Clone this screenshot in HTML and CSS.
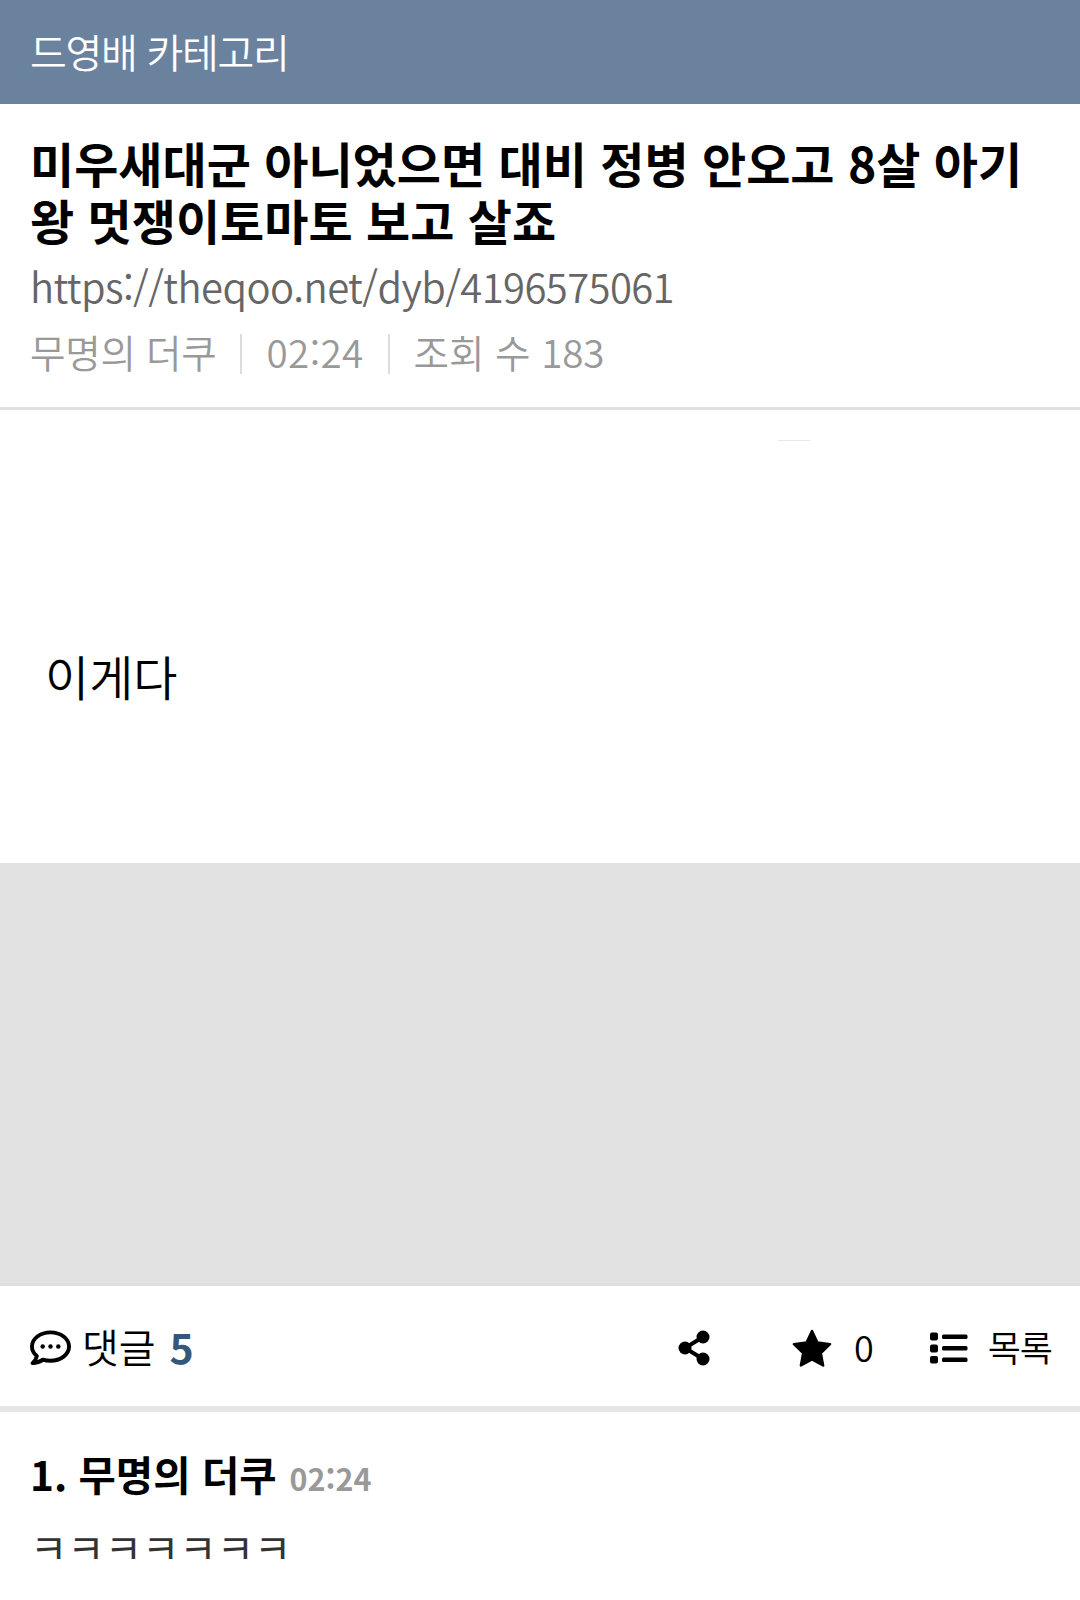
FILE: index.html
```html
<!DOCTYPE html>
<html lang="ko">
<head>
<meta charset="utf-8">
<title>드영배 카테고리</title>
<link rel="stylesheet" href="styles.css">
</head>
<body>
<header class="cat-bar">드영배 카테고리</header>
<section class="post-head">
  <h1 class="post-title">미우새대군 아니었으면 대비 정병 안오고 8살 아기왕 멋쟁이토마토 보고 살죠</h1>
  <div class="post-url">https://theqoo.net/dyb/4196575061</div>
  <div class="post-meta">
    <span>무명의 더쿠</span><i class="sep"></i><span class="meta-time">02:24</span><i class="sep"></i><span class="meta-views">조회 수 183</span>
  </div>
</section>
<section class="post-body">
  <div class="speck"></div>
  <p class="post-text">이게다</p>
</section>
<div class="ad-block"></div>
<nav class="action-bar">
  <div class="act-left">
    <svg class="ico-chat" viewBox="0 0 42 36" width="41" height="36" aria-hidden="true">
      <path d="M21 2C10.500 2 2 8.400 2 16.500c0 3.900 1.900 7.200 5 9.800-.5 2.800-2 5-4.300 7.200 3.900-.1 7.700-1.500 10.500-3.600 2.400.8 5 1.200 7.800 1.200 10.500 0 19-6.600 19-14.600S31.500 2 21 2z" fill="none" stroke="#000" stroke-width="4" stroke-linejoin="round"/>
      <circle cx="13" cy="16.500" r="2.300"/><circle cx="21" cy="16.500" r="2.300"/><circle cx="29" cy="16.500" r="2.300"/>
    </svg>
    <span class="act-label">댓글</span><b class="count">5</b>
  </div>
  <div class="act-right">
    <svg class="ico-share" viewBox="0 0 32 36" width="32" height="36" aria-hidden="true">
      <path d="M25 7 7 18l18 11" fill="none" stroke="#000" stroke-width="4"/>
      <circle cx="25" cy="7" r="6.500"/><circle cx="7" cy="18" r="6.500"/><circle cx="25" cy="29" r="6.500"/>
    </svg>
    <span class="fav">
      <svg class="ico-star" viewBox="0 0 40 38" width="40" height="38" aria-hidden="true">
        <path d="M20 2l5.400 11.500 12.600 1.700-9.200 8.800 2.300 12.500L20 30.500 8.900 36.500l2.300-12.500L2 15.200l12.600-1.700z" stroke="#000" stroke-width="2.500" stroke-linejoin="round"/>
      </svg>
      <span class="act-num">0</span>
    </span>
    <span class="list">
      <svg class="ico-list" viewBox="0 0 38 32" width="38" height="32" aria-hidden="true">
        <rect x="0" y="0.500" width="8" height="8" rx="2"/><rect x="0" y="12.500" width="8" height="8" rx="2"/><rect x="0" y="24" width="8" height="7.500" rx="2"/>
        <rect x="12" y="2.500" width="25.500" height="4.500" rx="1.500"/><rect x="12" y="14" width="25.500" height="4.500" rx="1.500"/><rect x="12" y="25.500" width="25.500" height="4.500" rx="1.500"/>
      </svg>
      <span class="act-list">목록</span>
    </span>
  </div>
</nav>
<section class="comment">
  <div class="c-head"><b class="c-name">1. 무명의 더쿠</b><span class="c-time">02:24</span></div>
  <div class="c-text">ㅋㅋㅋㅋㅋㅋㅋ</div>
</section>
</body>
</html>
```
FILE: styles.css
```css
* { box-sizing: border-box; }
html, body { margin: 0; padding: 0; background: #fff; }
body { width: 1080px; height: 1600px; overflow: hidden; font-family: "Noto Sans CJK KR", "Noto Sans", sans-serif; color: #000; }
.cat-bar { height: 104px; padding-left: 30px; background: #6b829f; color: #fff; font-size: 40px; font-weight: 350; letter-spacing: -1.3px; line-height: 102px; }
.post-head { padding: 30px 30px 0; height: 306px; border-bottom: 3px solid #e0e0e0; }
.post-title { margin: 0; font-size: 48px; font-weight: 700; line-height: 57px; }
.post-url { margin-top: 10px; font-size: 40px; font-weight: 350; line-height: 56px; color: #666; letter-spacing: -0.6px; }
.post-meta { display: flex; align-items: center; margin-top: 9px; font-size: 38.600px; font-weight: 350; line-height: 56px; color: #999; letter-spacing: -0.3px; }
.meta-time { letter-spacing: 0.4px; }
.meta-views { letter-spacing: -0.1px; }
.sep { width: 2px; height: 40px; margin: 6px 24px 0; background: #ddd; }
.post-body { position: relative; height: 453px; padding: 230px 16px 0 45px; }
.speck { position: absolute; left: 778px; top: 30px; width: 32px; height: 1px; background: #e6eae6; }
.post-text { margin: 0; font-size: 48px; line-height: 70px; font-weight: 350; }
.ad-block { height: 423px; background: #e2e2e2; border-bottom: 3px solid #dedede; }
.action-bar { display: flex; align-items: center; justify-content: space-between; height: 126px; padding: 0 28px 0 30px; border-bottom: 6px solid #e6e6e6; }
.act-left, .act-right, .fav, .list { display: flex; align-items: center; }
.act-left svg, .act-right svg { margin-top: 4px; }
.ico-chat { margin-right: 11px; }
.act-label { font-size: 40px; font-weight: 350; letter-spacing: 0; }
.count { margin-left: 14px; font-size: 41px; color: #34587b; }
.ico-share { margin-right: 82px; }
.fav { margin-right: 56px; }
.act-num { margin-left: 22px; font-size: 36px; font-weight: 350; }
.act-list { margin-left: 20px; font-size: 36px; font-weight: 350; letter-spacing: -1px; }
.comment { padding: 32px 30px 0; }
.c-head { display: flex; align-items: baseline; }
.c-name { font-size: 40.600px; font-weight: 700; }
.c-time { margin-left: 13px; font-size: 30.500px; font-weight: 700; color: #999; }
.c-text { margin-top: 14px; font-size: 40.600px; color: #333; font-weight: 400; }
```
